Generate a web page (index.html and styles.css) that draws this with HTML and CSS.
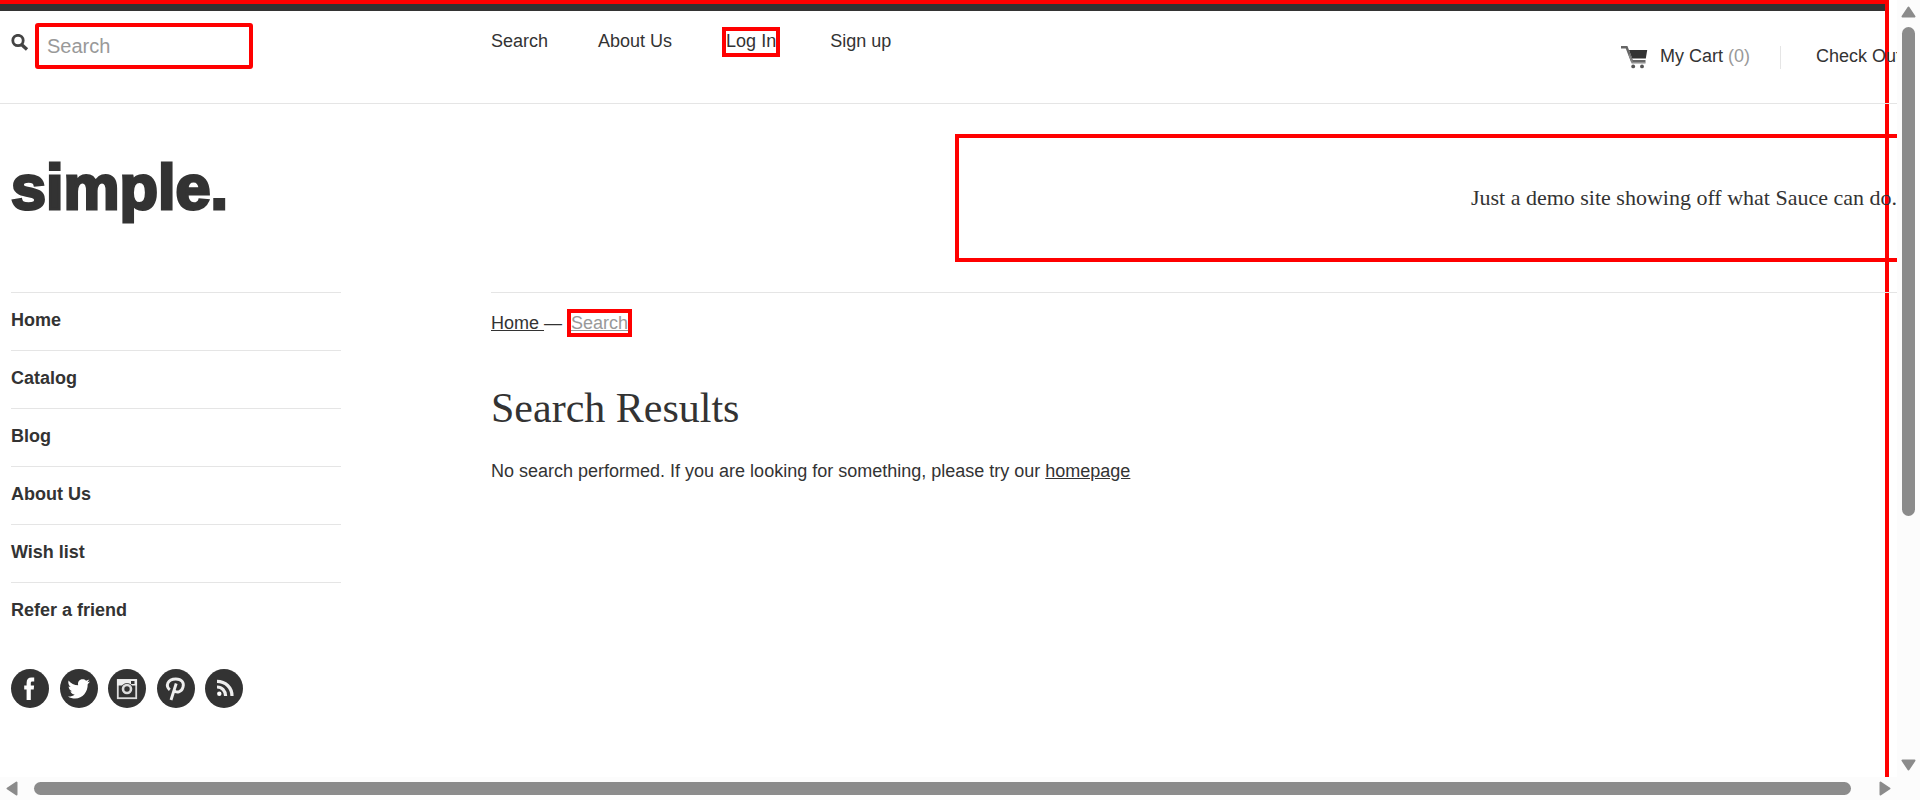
FILE: index.html
```html
<!DOCTYPE html>
<html lang="en">
<head>
<meta charset="utf-8">
<title>Search Results – simple.</title>
<link rel="stylesheet" href="styles.css">
</head>
<body>
<div class="window">
  <div class="viewport">
    <div class="page">
      <header class="topbar">
        <form class="search">
          <button class="search-button" type="button" aria-label="Submit search">
            <svg width="18" height="17" viewBox="0 0 18 17"><circle cx="7" cy="6.5" r="5.2" fill="none" stroke="#444" stroke-width="2.8"/><path d="M10.5 10.5 16 15.4" stroke="#444" stroke-width="3.4"/></svg>
          </button>
          <input class="search-input outlined" type="text" placeholder="Search" aria-label="Search">
        </form>
        <nav class="topnav">
          <a href="#">Search</a>
          <a href="#">About Us</a>
          <a href="#" class="outlined">Log In</a>
          <a href="#">Sign up</a>
        </nav>
        <div class="cart">
          <a href="#" class="cart-link">
            <svg width="27" height="23" viewBox="0 0 27 23"><path d="M0 1.3h5.6L11 15.2h13.5" fill="none" stroke="#666" stroke-width="2.4"/><path d="M8 4h18.2l-1.4 8.4H11.2z" fill="#333"/><path d="M8 8.5l3.5 8.3M10.5 16.9h14" fill="none" stroke="#888" stroke-width="1.4"/><circle cx="12.2" cy="20.4" r="1.9" fill="#555"/><circle cx="21" cy="20.4" r="1.9" fill="#555"/></svg>
            <span>My Cart <span class="muted">(0)</span></span>
          </a>
          <a href="#" class="checkout">Check Out</a>
        </div>
      </header>

      <div class="masthead">
        <a href="#" class="logo">simple.</a>
        <div class="tagline outlined">Just a demo site showing off what Sauce can do.</div>
      </div>

      <div class="columns">
        <aside class="sidebar">
          <nav class="sidenav">
            <a href="#">Home</a>
            <a href="#">Catalog</a>
            <a href="#">Blog</a>
            <a href="#">About Us</a>
            <a href="#">Wish list</a>
            <a href="#">Refer a friend</a>
          </nav>
          <div class="social">
            <a href="#" aria-label="Facebook"><svg viewBox="0 0 38 39"><ellipse cx="19" cy="19.500" rx="19" ry="19.500" fill="#333"/><path d="M15.600 31V20.500h-2.400v-4h2.400v-2.600c0-3.600 1.800-5.400 5-5.400h2.600v4h-1.600c-1.500 0-1.800.6-1.800 1.800v2.200h3.300l-.4 4h-2.900V31z" fill="#fff"/></svg></a>
            <a href="#" aria-label="Twitter"><svg viewBox="0 0 38 39"><ellipse cx="19" cy="19.500" rx="19" ry="19.500" fill="#333"/><path d="M8.500 11.500c2.500 3 5.600 4.600 9.700 4.800-.8-3.600 1.300-6 4.300-6 1.500 0 2.600.5 3.500 1.400l3.300-1.200-1.800 2.700 2.600-.6-2.400 2.700c.2 7.600-5 14.200-12.400 14.200-2.800 0-5.300-.7-7.300-2.100 2.700.2 4.800-.5 6.700-2-2.200-.1-3.700-1.300-4.300-3.200h1.900c-2.300-.8-3.600-2.400-3.700-4.700l2.100.6c-2-1.600-2.800-3.900-2.200-6.600z" fill="#fff"/></svg></a>
            <a href="#" aria-label="Instagram"><svg viewBox="0 0 38 39"><ellipse cx="19" cy="19.500" rx="19" ry="19.500" fill="#333"/><rect x="9.800" y="11" width="18.400" height="18.200" fill="none" stroke="#ddd" stroke-width="1.800"/><path d="M9 10.200h20v6.300H9z" fill="#eee"/><rect x="23" y="12" width="3.500" height="3" fill="#333"/><circle cx="19" cy="20" r="6" fill="#333"/><circle cx="19" cy="20" r="4" fill="none" stroke="#ddd" stroke-width="2.600"/></svg></a>
            <a href="#" aria-label="Pinterest"><svg viewBox="0 0 38 39"><ellipse cx="19" cy="19.500" rx="19" ry="19.500" fill="#333"/><path d="M12.800 20.800c-4.600-3.800-2.300-10.800 6-10.800 6 0 8.500 3.800 7.200 8.200-1.400 5.200-6.800 6.100-8.600 3.200M19.200 14.500 14 31" fill="none" stroke="#eee" stroke-width="2.900"/></svg></a>
            <a href="#" aria-label="RSS"><svg viewBox="0 0 38 39"><ellipse cx="19" cy="19.500" rx="19" ry="19.500" fill="#333"/><circle cx="14.300" cy="24.800" r="2.200" fill="#fff"/><path d="M12 18c5 0 8.600 3.800 8.600 9M12 12.300c8.500 0 15 6.300 15 14.700" fill="none" stroke="#eee" stroke-width="3.200"/></svg></a>
          </div>
        </aside>
        <main class="content">
          <div class="breadcrumb"><a href="#">Home </a>— <a href="#" class="outlined muted">Search</a></div>
          <h1>Search Results</h1>
          <p>No search performed. If you are looking for something, please try our <a href="#">homepage</a></p>
        </main>
      </div>
    </div>
  </div>

  <div class="scrollbar vertical" aria-hidden="true">
    <svg width="15" height="12" viewBox="0 0 15 12"><path d="M7.500 1.500 13.500 10.500H1.500z"/></svg>
    <div class="track"><div class="thumb"></div></div>
    <svg width="15" height="12" viewBox="0 0 15 12"><path d="M1.500 1.500h12L7.500 10.500z"/></svg>
  </div>
  <div class="scrollbar horizontal" aria-hidden="true">
    <svg width="12" height="15" viewBox="0 0 12 15"><path d="M10.500 1.500v12L1.500 7.500z"/></svg>
    <div class="track"><div class="thumb"></div></div>
    <svg width="12" height="15" viewBox="0 0 12 15"><path d="M1.500 1.500v12l9-6z"/></svg>
  </div>
  <div class="corner"></div>
</div>
</body>
</html>
```

FILE: styles.css
```css
* { box-sizing: border-box; }

body {
  margin: 0;
  background: #fff;
  color: #333;
  font: 18px/22px "Liberation Sans", Arial, sans-serif;
}

a { color: inherit; }
svg { display: block; flex: none; }

.window {
  display: grid;
  grid-template-columns: minmax(0, 1fr) 23px;
  grid-template-rows: minmax(0, 1fr) 23px;
  height: 100vh;
}

.viewport { overflow: hidden; }

.page {
  min-height: 100%;
  margin-right: 8px;
  border: solid #f00;
  border-width: 4px 4px 0 0;
}

.page::before {
  content: "";
  display: block;
  height: 7px;
  background: #333;
}

.outlined { border: 4px solid #f00; }
.muted { color: #999; }

.topbar {
  display: grid;
  grid-template-columns: 480px minmax(0, 1fr) auto;
  align-items: start;
  height: 93px;
  margin-right: -16px;
  padding-left: 11px;
  border-bottom: 1px solid #e5e5e5;
}

.topbar a { text-decoration: none; }

.search {
  display: flex;
  align-items: flex-start;
  gap: 6px;
  padding-top: 12px;
}

.search-button {
  margin-top: 11px;
  padding: 0;
  border: 0;
  background: none;
}

.search-input {
  width: 218px;
  height: 46px;
  padding: 0 8px;
  border-radius: 3px;
  background: #fff;
  color: #333;
  font: 20px "Liberation Sans", Arial, sans-serif;
}

.search-input::placeholder { color: #999; opacity: 1; }

.topnav {
  display: flex;
  align-items: baseline;
  gap: 50px;
  padding-top: 16px;
  line-height: 20px;
}

.topnav .outlined { padding-bottom: 2px; }

.cart {
  display: flex;
  padding-top: 35px;
  line-height: 20px;
  white-space: nowrap;
}

.cart-link {
  display: flex;
  gap: 12px;
  padding-right: 30px;
  border-right: 1px solid #e5e5e5;
}

.checkout { padding-left: 35px; }

.masthead {
  display: flex;
  justify-content: space-between;
  align-items: flex-start;
  margin-right: -24px;
  padding: 30px 0;
}

.logo {
  padding: 17px 0 0 11px;
  font: bold 63px/72px "Liberation Sans", Arial, sans-serif;
  text-decoration: none;
  -webkit-text-stroke: 3px #333;
}

.tagline {
  width: 50%;
  padding: 48px 8px;
  font: 22px/24px "Liberation Serif", "Times New Roman", serif;
  text-align: right;
}

.columns {
  display: grid;
  grid-template-columns: 330px minmax(0, 1fr);
  gap: 150px;
  margin-right: -14px;
  padding-left: 11px;
}

.sidenav a {
  display: block;
  padding: 16px 0 19px;
  border-top: 1px solid #e5e5e5;
  font-weight: bold;
  text-decoration: none;
}

.social {
  display: flex;
  justify-content: space-between;
  width: 232px;
  padding-top: 29px;
}

.social svg { width: 38px; height: 39px; }

.content { border-top: 1px solid #e5e5e5; }

.breadcrumb { padding-top: 19px; }

h1 {
  margin: 49px 0 27px;
  font: 42px/50px "Liberation Serif", "Times New Roman", serif;
}

p { margin: 0; }

.scrollbar {
  display: flex;
  align-items: center;
  gap: 9px;
  padding: 6px;
  background: #fcfcfc;
}

.scrollbar svg { fill: #8b8b8b; stroke: #8b8b8b; stroke-width: 2; stroke-linejoin: round; }
.vertical { flex-direction: column; padding: 6px 0; }
.horizontal { gap: 16px; padding: 4px 6px; }
.track { flex: 1; }
.thumb { width: 13px; height: calc(68% - 3px); border-radius: 7px; background: #8b8b8b; }
.vertical .track { min-height: 0; }
.horizontal .thumb { width: calc(100% - 12px); height: 13px; }
.corner { background: #fcfcfc; }
```
